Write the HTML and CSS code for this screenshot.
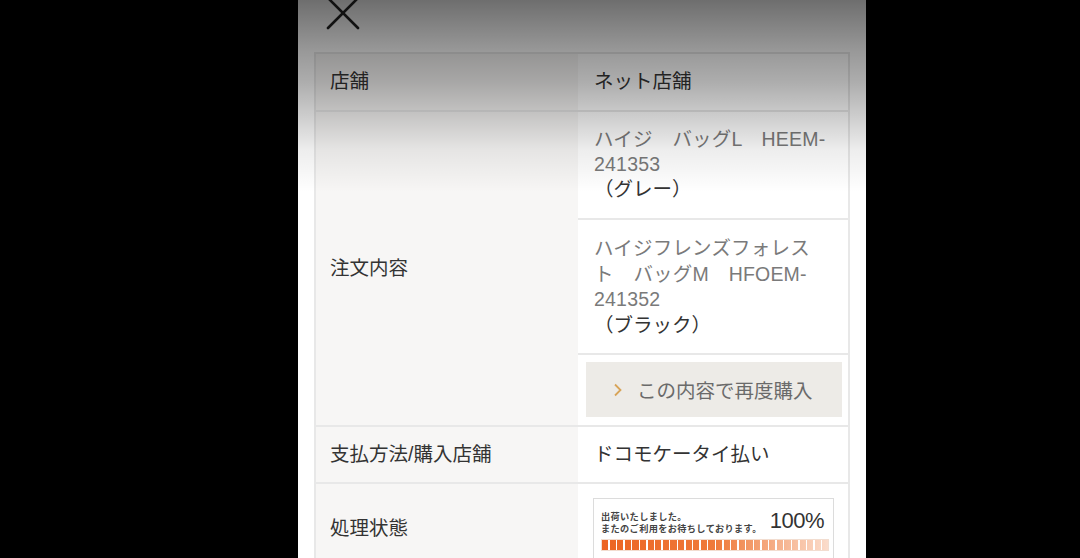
FILE: index.html
```html
<!DOCTYPE html>
<html lang="ja">
<head>
<meta charset="utf-8">
<link rel="stylesheet" href="styles.css">
</head>
<body>
<div class="panel">
  <div class="shade"></div>
  <div class="header">
    <svg class="close" width="34" height="34" viewBox="0 0 34 34">
      <path d="M2 -2 L32 28 M32 -2 L2 28" stroke="#111" stroke-width="2.6" fill="none" stroke-linecap="round"/>
    </svg>
  </div>
  <div class="table">
    <div class="row">
      <div class="label">店舗</div>
      <div class="value">ネット店舗</div>
    </div>
    <div class="row">
      <div class="label">注文内容</div>
      <div class="value stack">
        <div class="item">
          <span class="name">ハイジ　バッグL　HEEM-<br>241353</span><br>
          <span class="color">（グレー）</span>
        </div>
        <div class="item">
          <span class="name">ハイジフレンズフォレス<br>ト　バッグM　HFOEM-<br>241352</span><br>
          <span class="color">（ブラック）</span>
        </div>
        <div class="btn-cell">
          <div class="btn">
            <svg class="chev" width="10" height="14" viewBox="0 0 10 14"><polyline points="2,1.5 7.5,7 2,12.5" fill="none" stroke="#d8a458" stroke-width="1.8"/></svg>
            <span>この内容で再度購入</span>
          </div>
        </div>
      </div>
    </div>
    <div class="row">
      <div class="label">支払方法/購入店舗</div>
      <div class="value">ドコモケータイ払い</div>
    </div>
    <div class="row">
      <div class="label">処理状態</div>
      <div class="value status-cell">
        <div class="status">
          <div class="status-top">
            <div class="msg">出荷いたしました。<br>またのご利用をお待ちしております。</div>
            <div class="pct">100%</div>
          </div>
          <div class="bar"></div>
        </div>
      </div>
    </div>
  </div>
</div>
</body>
</html>
```

FILE: styles.css
```css
html, body {
  margin: 0;
  padding: 0;
  background: #000;
  height: 558px;
  overflow: hidden;
}
body {
  font-family: "Liberation Sans", "Noto Sans CJK JP", sans-serif;
  color: #333;
}
.panel {
  position: relative;
  margin-left: 298px;
  width: 568px;
  height: 558px;
  background: #fff;
  overflow: hidden;
}
.shade {
  position: absolute;
  left: 0;
  top: 0;
  width: 100%;
  height: 200px;
  background: linear-gradient(to bottom,
    rgba(0,0,0,0.57) 0px,
    rgba(0,0,0,0.40) 52px,
    rgba(0,0,0,0.32) 82px,
    rgba(0,0,0,0.21) 112px,
    rgba(0,0,0,0.07) 150px,
    rgba(0,0,0,0) 192px);
  z-index: 2;
  pointer-events: none;
}
.header {
  height: 52px;
  position: relative;
  z-index: 3;
}
.close {
  display: block;
  margin-left: 28px;
}
.table {
  margin: 0 16px;
  border: 2px solid #e8e8e8;
  border-bottom: none;
}
.row {
  display: grid;
  grid-template-columns: 262px 1fr;
  border-bottom: 2px solid #e8e8e8;
}
.label {
  background: #f7f6f5;
  display: flex;
  align-items: center;
  padding-left: 14px;
  padding-bottom: 5px;
  font-size: 19.5px;
  color: #333;
}
.value {
  display: flex;
  align-items: center;
  padding-left: 16px;
  font-size: 19.5px;
  color: #333;
}
.row:first-child .value,
.row:nth-child(3) .value {
  padding-bottom: 5px;
}
.row:first-child .label,
.row:first-child .value {
  height: 56px;
  box-sizing: border-box;
}
.row:nth-child(3) .label,
.row:nth-child(3) .value {
  height: 55px;
  box-sizing: border-box;
}
.row:nth-child(2) .label {
  padding-bottom: 4px;
}
.value.stack {
  display: flex;
  flex-direction: column;
  align-items: stretch;
  padding-left: 0;
}
.item {
  padding: 15px 0 16px 16px;
  border-bottom: 2px solid #e8e8e8;
  font-size: 19.5px;
  line-height: 25px;
  white-space: nowrap;
}
.item .name {
  color: #7a7a7a;
  letter-spacing: 0.2px;
}
.item .color {
  color: #333;
}
.item:nth-child(2) {
  padding-top: 16px;
  padding-bottom: 15px;
  line-height: 25.5px;
}
.btn-cell {
  padding: 7px 6px 8px 8px;
}
.btn {
  height: 55px;
  background: #edebe7;
  display: flex;
  align-items: center;
  padding-left: 27px;
  gap: 14px;
  color: #6a6a6a;
  font-size: 19.5px;
}
.chev {
  display: block;
}
.status-cell {
  align-items: flex-start;
  padding: 14px 14px 0 15px;
  height: 92px;
  box-sizing: border-box;
}
.row:nth-child(4) .label {
  height: 92px;
  box-sizing: border-box;
  padding-bottom: 8px;
}
.status {
  width: 241px;
  height: 76px;
  box-sizing: border-box;
  border: 1px solid #dcdcdc;
  padding: 9px 4px 0 7px;
}
.status-top {
  display: flex;
  align-items: center;
  justify-content: space-between;
  padding-right: 5px;
}
.msg {
  font-family: "Noto Sans CJK JP", sans-serif;
  font-size: 9.2px;
  font-weight: bold;
  letter-spacing: 0.35px;
  line-height: 12px;
  color: #444;
  padding-top: 2px;
}
.pct {
  font-family: "Liberation Sans", sans-serif;
  font-size: 22px;
  color: #333;
  letter-spacing: -0.5px;
}
.bar {
  margin-top: 5px;
  height: 12px;
  width: 228px;
  box-sizing: border-box;
  border: 1px solid #f2ddd0;
  background:
    repeating-linear-gradient(to right, transparent 0 6.2px, #fff 6.2px 7.6px),
    linear-gradient(to right, #ec6422 0%, #ef7a3a 50%, #fbdccb 100%);
}
```
